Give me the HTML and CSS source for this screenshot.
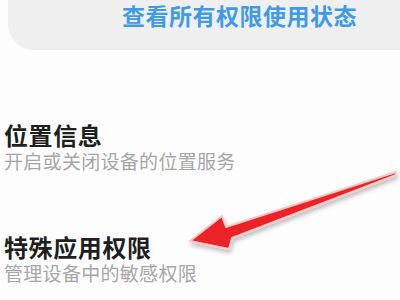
FILE: index.html
```html
<!DOCTYPE html>
<html lang="zh-CN">
<head>
    <meta charset="UTF-8">
    <title>权限管理</title>
    <link rel="stylesheet" href="styles.css">
</head>
<body>
    <div class="page">
        <div class="status-card">
            <a class="status-link" href="#">查看所有权限使用状态</a>
        </div>

        <div class="setting">
            <div class="setting-title">位置信息</div>
            <div class="setting-desc">开启或关闭设备的位置服务</div>
        </div>

        <div class="setting special">
            <div class="setting-title">特殊应用权限</div>
            <div class="setting-desc">管理设备中的敏感权限</div>
        </div>

        <!-- red arrow drawn over the list -->
        <svg class="arrow" width="400" height="300" viewBox="0 0 400 300">
            <defs>
                <filter id="shadow" x="-10%" y="-30%" width="130%" height="180%">
                    <feDropShadow dx="1" dy="3" stdDeviation="2" flood-color="#000" flood-opacity="0.25"/>
                </filter>
            </defs>
            <polygon points="190,241 222,216 226,227 396,172 396,175 232,238 229,249"
                     fill="#ec2227" stroke="#f6c9c6" stroke-width="2" stroke-linejoin="round"
                     filter="url(#shadow)"/>
        </svg>
    </div>
</body>
</html>
```

FILE: styles.css
```css
body {
    margin: 0;
    padding: 0;
    background-color: #fdfdfd;
    font-family: "Noto Sans CJK SC", "Noto Sans", sans-serif;
    overflow: hidden;
}
.page {
    position: relative;
    width: 400px;
    height: 300px;
    overflow: hidden;
}
.status-card {
    margin-left: 8px;
    margin-right: -40px;
    height: 50px;
    background-color: #efefef;
    border-radius: 0 0 0 26px;
    box-sizing: border-box;
    padding-left: 114px;
    padding-top: 0;
}
.status-link {
    display: block;
    font-size: 23px;
    line-height: 30px;
    font-weight: bold;
    color: #3f9be6;
    text-decoration: none;
    letter-spacing: 0.5px;
}
.setting {
    padding-left: 4px;
    margin-top: 71px;
}
.setting.special {
    margin-top: 60px;
}
.setting-title {
    font-size: 24px;
    line-height: 28px;
    font-weight: bold;
    color: #1f1f1f;
    letter-spacing: 0.6px;
}
.setting-desc {
    font-size: 19px;
    line-height: 24px;
    color: #a7a7a7;
    letter-spacing: 0.3px;
}
.arrow {
    position: absolute;
    left: 0;
    top: 0;
}
```
